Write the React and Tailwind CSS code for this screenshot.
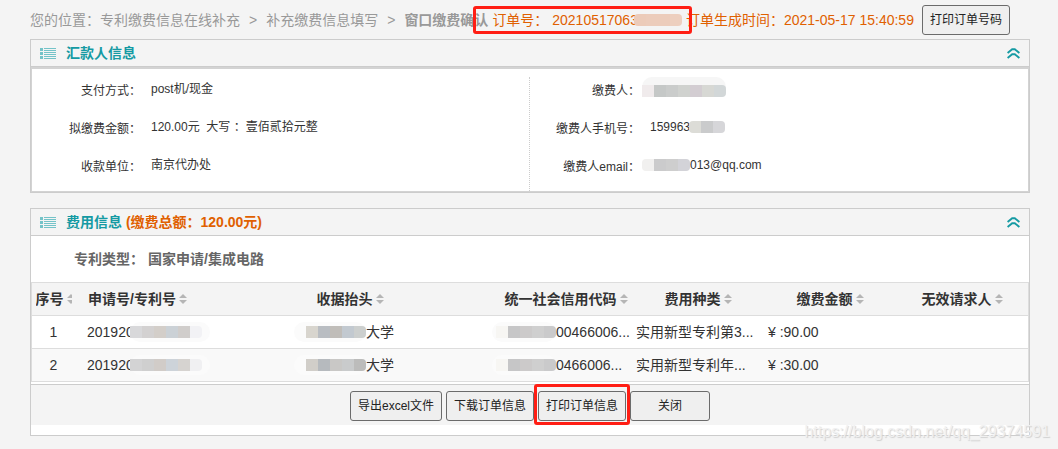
import { useState } from 'react'
import clsx from 'clsx'

const columns = [
  { key: 'no', label: '序号', width: 'w-[43px]' },
  { key: 'patent', label: '申请号/专利号', width: 'w-[125px]' },
  { key: 'title', label: '收据抬头', width: '' },
  { key: 'credit', label: '统一社会信用代码', width: 'w-[132px]' },
  { key: 'kind', label: '费用种类', width: 'w-[132px]' },
  { key: 'amount', label: '缴费金额', width: 'w-[132px]' },
  { key: 'invalid', label: '无效请求人', width: 'w-[132px]' },
]

const rows = [
  {
    no: 1,
    patent: '201920',
    patentMask: ['bg-[#d8d8da]', 'bg-[#d3d1d1]', 'bg-[#d3cec9]', 'bg-[#cbd1d6]', 'bg-[#d0cdcb]', 'bg-[#f2f2f5]'],
    titleMask: ['bg-[#d8d5ce]', 'bg-[#b9bdc2]', 'bg-[#c0bdb9]', 'bg-[#c2c9d0]', 'bg-[#cccfce]'],
    credit: '00466006...',
    kind: '实用新型专利第3...',
    amount: '¥ :90.00',
  },
  {
    no: 2,
    patent: '201920',
    patentMask: ['bg-[#d3d3d4]', 'bg-[#cfcfcf]', 'bg-[#d1ccc8]', 'bg-[#cdd3d9]', 'bg-[#d6d3d0]', 'bg-[#f0f0f2]'],
    titleMask: ['bg-[#d1cec9]', 'bg-[#b6babe]', 'bg-[#c9c8c6]', 'bg-[#c9cbcc]', 'bg-[#bcbcbb]'],
    credit: '0466006...',
    kind: '实用新型专利年...',
    amount: '¥ :30.00',
  },
]

function Mask({ cells, className, halo }) {
  return (
    <span className={clsx('relative isolate inline-flex shrink-0', className)}>
      {halo && <span className={clsx('absolute -z-10 rounded-full', halo)} />}
      {cells.map((c, i) => (
        <span key={i} className={clsx('w-3 h-3 first:rounded-l-sm last:rounded-r-sm', c)} />
      ))}
    </span>
  )
}

function ListIcon() {
  return (
    <svg width="16" height="11" viewBox="0 0 16 11" fill="#74c3c8" shapeRendering="crispEdges" aria-hidden="true">
      {[0, 4, 8].map(y => <rect key={y} x="0" y={y} width="3" height="3" />)}
      {[0, 2, 4, 6, 8, 10].map(y => <rect key={y} x="4" y={y} width="12" height="1" />)}
    </svg>
  )
}

function CollapseIcon() {
  return (
    <svg width="13" height="11" viewBox="0 0 13 11" fill="none" stroke="#159aa3" strokeWidth="1.9" aria-hidden="true">
      <path d="M0.6 5L5.2 1.3H7.8L12.4 5" />
      <path d="M0.6 10L5.2 6.3H7.8L12.4 10" />
    </svg>
  )
}

function SortIcon() {
  return (
    <svg className="shrink-0" width="8" height="10" viewBox="0 0 8 10" fill="#b5b5b5" aria-hidden="true">
      <path d="M4 0L8 4H0Z" />
      <path d="M0 6H8L4 10Z" />
    </svg>
  )
}

function Panel({ title, extra, open, onToggle, children }) {
  return (
    <section className="border border-[#ccc]">
      <header className={clsx('flex items-center h-[27px] px-[9px]', open && 'border-b border-[#ccc]')}>
        <ListIcon />
        <h2 className="ml-[10px] text-sm font-bold text-[#159aa3]">
          {title}
          {extra && <span className="text-[#e06000]"> {extra}</span>}
        </h2>
        <button type="button" onClick={onToggle} aria-expanded={open} aria-label={title} className="ml-auto">
          <CollapseIcon />
        </button>
      </header>
      {open && children}
    </section>
  )
}

function Field({ label, children }) {
  return (
    <div className="flex h-[38px] items-start">
      <dt className="w-[109px] pt-[2px] text-right">{label}：</dt>
      <dd className="flex items-center h-6 ml-[10px] whitespace-pre">{children}</dd>
    </div>
  )
}

function Button({ children, className, onClick }) {
  return (
    <button
      type="button"
      onClick={onClick}
      className={clsx('h-[30px] px-[7px] text-xs whitespace-nowrap text-[#222] bg-[#efefef] border border-[#6b6b6b] rounded-[3px] hover:bg-[#e5e5e5]', className)}
    >
      {children}
    </button>
  )
}

export default function App() {
  const [payerOpen, setPayerOpen] = useState(true)
  const [feeOpen, setFeeOpen] = useState(true)

  return (
    <div className="relative min-h-screen bg-[#f4f4f4] pl-[30px] pr-7 text-[#333] font-['Liberation_Sans','Noto_Sans_CJK_SC',sans-serif]">
      <div className="flex items-center h-[39px] text-sm whitespace-nowrap text-[#999]">
        <nav className="flex" aria-label="您的位置">
          <span>您的位置：</span>
          <a href="#supplement">专利缴费信息在线补充</a>
          <span className="mx-[9px]">&gt;</span>
          <a href="#fill">补充缴费信息填写</a>
          <span className="mx-[9px]">&gt;</span>
          <strong>窗口缴费确认</strong>
        </nav>
        <div className="relative ml-1 flex items-center text-[#e06000]">
          <span>订单号： 20210517063</span>
          <Mask cells={['bg-[#eccbb9]', 'bg-[#ecccbb]', 'bg-[#ecccbb]', 'bg-[#edcfbf]']} className="-ml-1" />
          <span className="absolute -left-[19px] -right-[10px] -top-1 -bottom-1 border-3 border-[#ff1e14] rounded-[3px] z-10" />
        </div>
        <span className="ml-1 text-[#e06000]">订单生成时间：2021-05-17 15:40:59</span>
        <Button className="ml-2">打印订单号码</Button>
      </div>

      <Panel title="汇款人信息" open={payerOpen} onToggle={() => setPayerOpen(!payerOpen)}>
        <dl className="grid grid-cols-2 pt-2 bg-white border border-t-2 border-[#d3d3d3] text-xs leading-6">
          <div className="h-[114px] border-r border-dotted border-[#ccc]">
            <Field label="支付方式">post机/现金</Field>
            <Field label="拟缴费金额">120.00元  大写 ：壹佰贰拾元整</Field>
            <Field label="收款单位">南京代办处</Field>
          </div>
          <div className="pl-px">
            <Field label="缴费人">
              <Mask
                cells={['bg-[#f0ebec]', 'bg-[#c5c8c7]', 'bg-[#cacccb]', 'bg-[#d0d2cf]', 'bg-[#d3cdd2]', 'bg-[#d7d8d4]', 'bg-[#d2d7d8]']}
                className="-ml-2 mt-1"
                halo="-top-2 left-0 right-0 bottom-0 bg-[#f6f6f6]"
              />
            </Field>
            <Field label="缴费人手机号">
              159963
              <Mask cells={['bg-[#dcdcd7]', 'bg-[#cacbcc]', 'bg-[#d6d6d9]']} className="-ml-px" />
            </Field>
            <Field label="缴费人email">
              <Mask cells={['bg-[#f1f0ef]', 'bg-[#cbcbcc]', 'bg-[#cecece]', 'bg-[#d3d3d8]']} className="-ml-2" />
              013@qq.com
            </Field>
          </div>
        </dl>
      </Panel>

      <div className="h-[15px]" />

      <Panel title="费用信息" extra="(缴费总额：120.00元)" open={feeOpen} onToggle={() => setFeeOpen(!feeOpen)}>
        <div className="bg-white pb-[10px]">
          <div className="flex items-center h-[46px] pl-[43px] text-sm font-bold text-[#666]">
            <span>专利类型：</span>
            <span className="ml-1">国家申请/集成电路</span>
          </div>
          <div className="border border-[#ddd]">
            <table className="w-full table-fixed border-collapse text-sm">
              <thead>
                <tr className="h-8 bg-[#f4f4f4] border-b border-[#ddd]">
                  {columns.map(col => (
                    <th key={col.key} className={clsx('p-0 font-bold overflow-hidden', col.width)}>
                      <button
                        type="button"
                        className={clsx(
                          'flex items-center gap-[3px] mx-auto whitespace-nowrap font-bold',
                          col.key === 'no' && 'w-9 overflow-hidden',
                        )}
                      >
                        {col.label}
                        <SortIcon />
                      </button>
                    </th>
                  ))}
                </tr>
              </thead>
              <tbody>
                {rows.map(row => (
                  <tr key={row.no} className="h-[33px] bg-white even:bg-[#f9f9f9] not-last:border-b border-[#ddd]">
                    <td className="p-0 text-center">{row.no}</td>
                    <td className="p-0 pl-3">
                      <div className="flex items-center whitespace-nowrap">
                        {row.patent}
                        <Mask cells={row.patentMask} className="-ml-1" halo="left-0 -right-2 -top-1 -bottom-1 bg-[#fbfbfb]" />
                      </div>
                    </td>
                    <td className="p-0">
                      <div className="flex items-center justify-center">
                        <Mask cells={row.titleMask} halo="-left-3 right-0 -top-1 -bottom-1 bg-[#fbfbfb]" />
                        大学
                      </div>
                    </td>
                    <td className="p-0">
                      <div className="flex items-center whitespace-nowrap">
                        <Mask
                          cells={['bg-[#f7f6f3]', 'bg-[#c6c6c7]', 'bg-[#cccaca]', 'bg-[#cfcfcf]', 'bg-[#cacacb]']}
                          className="-ml-1"
                          halo="-left-1 right-0 -top-1 -bottom-1 bg-[#fbfbfb]"
                        />
                        {row.credit}
                      </div>
                    </td>
                    <td className="p-0 px-1 whitespace-nowrap">{row.kind}</td>
                    <td className="p-0 px-1 whitespace-nowrap">{row.amount}</td>
                    <td className="p-0 px-1" />
                  </tr>
                ))}
              </tbody>
            </table>
          </div>
          <div className="flex justify-center gap-1 mt-[2px] pt-[6px] pb-1 bg-[#f4f4f4] border-t border-[#ccc]">
            <Button>导出excel文件</Button>
            <Button>下载订单信息</Button>
            <div className="relative">
              <Button>打印订单信息</Button>
              <span className="absolute -inset-x-1 -top-[7px] -bottom-1 border-3 border-[#ff1e14] rounded-[3px] pointer-events-none" />
            </div>
            <Button className="w-20">关闭</Button>
          </div>
        </div>
      </Panel>

      <span className="absolute right-2 bottom-[5px] text-base text-[#f1f1f1] [text-shadow:1px_1px_1px_#d0d0d0]">
        https://blog.csdn.net/qq_29374591
      </span>
    </div>
  )
}
